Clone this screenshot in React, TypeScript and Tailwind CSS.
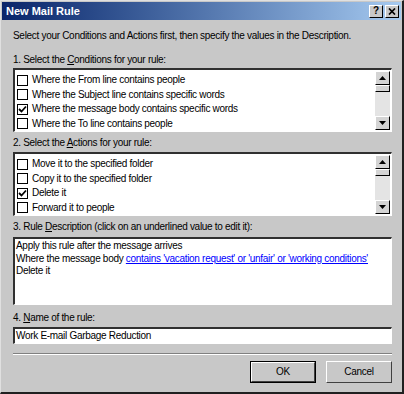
import React from "react";

const font = { fontFamily: '"Liberation Sans", Arial, sans-serif' };

function Check({ checked }: { checked?: boolean }) {
  return (
    <div className="w-[11px] h-[11px] border border-black bg-white flex items-center justify-center shrink-0">
      {checked && (
        <svg width="9" height="9" viewBox="0 0 9 9">
          <path d="M1 4 L3.5 6.5 L8 1.5" stroke="black" strokeWidth="1.8" fill="none" />
        </svg>
      )}
    </div>
  );
}

function ScrollBar() {
  return (
    <div className="w-[15px] flex flex-col bg-[#e4e4e4] shrink-0 mr-[1px] my-[1px]">
      <div className="h-[14px] bg-[#d4d4d4] border-t border-l border-white border-r border-b border-r-black border-b-black flex items-center justify-center">
        <svg width="7" height="4" viewBox="0 0 7 4"><path d="M3.5 0 L7 4 L0 4 Z" fill="black" /></svg>
      </div>
      <div className="h-[7px] bg-[#d4d4d4] border-t border-l border-white border-r border-b border-r-black border-b-black" />
      <div className="flex-1" />
      <div className="h-[14px] bg-[#d4d4d4] border-t border-l border-white border-r border-b border-r-black border-b-black flex items-center justify-center">
        <svg width="7" height="4" viewBox="0 0 7 4"><path d="M0 0 L7 0 L3.5 4 Z" fill="black" /></svg>
      </div>
    </div>
  );
}

function ListBox({ items }: { items: { t: string; c?: boolean }[] }) {
  return (
    <div className="h-[64px] flex bg-white border-t-2 border-l-2 border-t-[#303030] border-l-[#303030] border-r border-b border-r-white border-b-white overflow-hidden">
      <div className="flex-1 flex flex-col pl-[2px] pt-[3px] overflow-hidden">
        {items.map((it) => (
          <div key={it.t} className="h-[14.5px] flex items-center gap-[4px] whitespace-nowrap">
            <Check checked={it.c} />
            <span>{it.t}</span>
          </div>
        ))}
      </div>
      <ScrollBar />
    </div>
  );
}

function Btn({ label, def }: { label: string; def?: boolean }) {
  return (
    <div className={"w-[66px] h-[22px] flex items-center justify-center bg-[#c8c8c8] " + (def ? "border border-black" : "")}>
      <div className="w-full h-full flex items-center justify-center border-t border-l border-white border-r border-b border-r-[#404040] border-b-[#404040]">
        {label}
      </div>
    </div>
  );
}

export default function App() {
  return (
    <div style={font} className="w-[404px] h-[394px] bg-[#c8c8c8] text-[10px] tracking-[-0.3px] text-black border-t border-l border-t-[#e0e0e0] border-l-[#e0e0e0] border-r-2 border-b-2 border-r-[#202020] border-b-[#202020] flex flex-col overflow-hidden leading-none">
      <div className="h-[18px] mx-[1px] mt-[1px] bg-gradient-to-r from-[#0a246a] to-[#a6caf0] flex items-center justify-between pl-[4px] pr-[2px]">
        <span className="text-white font-bold text-[11px] tracking-normal">New Mail Rule</span>
        <div className="flex gap-[2px]">
          <div className="w-[14px] h-[13px] bg-[#c8c8c8] border-t border-l border-white border-r border-b border-r-black border-b-black flex items-center justify-center font-bold text-[10px]">?</div>
          <div className="w-[14px] h-[13px] bg-[#c8c8c8] border-t border-l border-white border-r border-b border-r-black border-b-black flex items-center justify-center">
            <svg width="8" height="7" viewBox="0 0 8 7"><path d="M1 0.5 L7 6.5 M7 0.5 L1 6.5" stroke="black" strokeWidth="1.7" /></svg>
          </div>
        </div>
      </div>
      <div className="flex flex-col pl-[12px] pr-[10px] pt-[11px]">
        <div className="h-[13px] whitespace-nowrap">Select your Conditions and Actions first, then specify the values in the Description.</div>
        <div className="mt-[11px] h-[13px]">1. Select the <u>C</u>onditions for your rule:</div>
        <ListBox
          items={[
            { t: "Where the From line contains people" },
            { t: "Where the Subject line contains specific words" },
            { t: "Where the message body contains specific words", c: true },
            { t: "Where the To line contains people" },
          ]}
        />
        <div className="mt-[6px] h-[14px]">2. Select the <u>A</u>ctions for your rule:</div>
        <ListBox
          items={[
            { t: "Move it to the specified folder" },
            { t: "Copy it to the specified folder" },
            { t: "Delete it", c: true },
            { t: "Forward it to people" },
          ]}
        />
        <div className="mt-[6px] h-[15px]">3. Rule <u>D</u>escription (click on an underlined value to edit it):</div>
        <div className="h-[68px] bg-white border-t-2 border-l-2 border-t-[#303030] border-l-[#303030] border-r border-b border-r-white border-b-white px-[1px] pt-[1px] leading-[12.5px]">
          <div>Apply this rule after the message arrives</div>
          <div className="whitespace-nowrap">
            Where the message body <span className="text-[#0000ff] underline">contains 'vacation request' or 'unfair' or 'working conditions'</span>
          </div>
          <div>Delete it</div>
        </div>
        <div className="mt-[8px] h-[14px]">4. <u>N</u>ame of the rule:</div>
        <div className="h-[17px] bg-white border-t-2 border-l-2 border-t-[#303030] border-l-[#303030] border-r border-b border-r-white border-b-white px-[1px] flex items-center">
          Work E-mail Garbage Reduction
        </div>
        <div className="mt-[9px] h-[2px] border-t border-t-[#808080] border-b border-b-white" />
        <div className="mt-[6px] flex justify-end gap-[10px]">
          <Btn label="OK" def />
          <Btn label="Cancel" />
        </div>
      </div>
    </div>
  );
}
